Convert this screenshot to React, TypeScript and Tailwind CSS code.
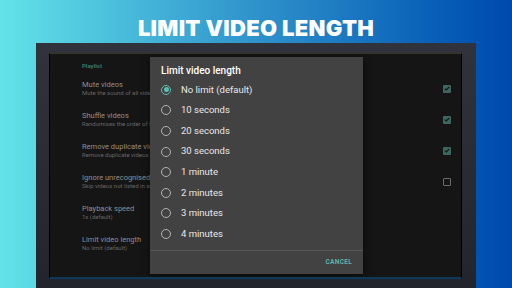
import React from "react";

const settings = [
  { title: "Mute videos", sub: "Mute the sound of all videos", check: true },
  { title: "Shuffle videos", sub: "Randomises the order of the videos", check: true },
  { title: "Remove duplicate videos", sub: "Remove duplicate videos", check: true },
  { title: "Ignore unrecognised/mismatched", sub: "Skip videos not listed in any playlist", check: false },
  { title: "Playback speed", sub: "1x (default)", check: null },
  { title: "Limit video length", sub: "No limit (default)", check: null },
];

const options = [
  "No limit (default)",
  "10 seconds",
  "20 seconds",
  "30 seconds",
  "1 minute",
  "2 minutes",
  "3 minutes",
  "4 minutes",
];

const CheckBox = ({ on }: { on: boolean }) =>
  on ? (
    <div className="w-[8px] h-[8px] rounded-[1px] bg-[#3d6661] flex items-center justify-center">
      <svg width="6" height="5" viewBox="0 0 6 5">
        <path d="M0.8 2.6 L2.3 4 L5.2 1" stroke="#151515" strokeWidth="1.1" fill="none" />
      </svg>
    </div>
  ) : (
    <div className="w-[8px] h-[8px] rounded-[1px] border border-[#6b6b6b]" />
  );

const Radio = ({ on }: { on: boolean }) =>
  on ? (
    <div className="w-[10px] h-[10px] rounded-full border-[1.5px] border-[#5ebdb3] flex items-center justify-center">
      <div className="w-[5px] h-[5px] rounded-full bg-[#5ebdb3]" />
    </div>
  ) : (
    <div className="w-[10px] h-[10px] rounded-full border-[1.5px] border-[#b3b3b3]" />
  );

export default function App() {
  return (
    <div
      className="w-[512px] h-[288px] overflow-hidden flex flex-col bg-gradient-to-r from-[#63e3e8] via-[#2f92cb] to-[#0048ad]"
      style={{ fontFamily: "Roboto, 'Noto Sans', sans-serif" }}
    >
      <div className="h-[43px] shrink-0 flex items-center justify-center pt-[12px]">
        <h1
          className="text-white text-[22px] leading-none font-black tracking-[0.3px]"
          style={{ fontFamily: "Inter, 'Liberation Sans', sans-serif" }}
        >
          LIMIT VIDEO LENGTH
        </h1>
      </div>

      <div className="ml-[36px] w-[440px] flex-1 flex bg-gradient-to-b from-[#30333b] to-[#22252b] pt-[10px] pl-[13px] pr-[14px] pb-[9px]">
        <div className="relative flex-1 bg-[#151515] border border-black border-t-[#3a3422] border-b-2 border-b-[#0c3a5a] overflow-hidden">
          <div className="pt-[7px] pl-[32px] pr-[10px]">
            <div className="text-[6px] leading-[9px] font-bold text-[#3b756e]">Playlist</div>
            <div className="mt-[3px]">
              {settings.map((s) => (
                <div key={s.title} className="h-[31px] flex items-center justify-between">
                  <div className="w-[68px] overflow-hidden flex flex-col whitespace-nowrap">
                    <span className="text-[7.5px] leading-[9px] text-[#8f8f8f]">{s.title}</span>
                    <span className="text-[6px] leading-[8px] text-[#666666]">{s.sub}</span>
                  </div>
                  {s.check !== null && <CheckBox on={s.check} />}
                </div>
              ))}
            </div>
          </div>

          <div className="absolute left-[100px] top-[3px] w-[213px] h-[217px] bg-[#424242] shadow-[0_2px_8px_rgba(0,0,0,0.6)] flex flex-col">
            <div className="pt-[9px] pl-[11px] text-[10px] leading-[10px] font-medium text-white">
              Limit video length
            </div>
            <div className="h-[174px] overflow-hidden pt-[3.5px]">
              {options.map((o, i) => (
                <div key={o} className="h-[20.6px] flex items-center pl-[11px]">
                  <Radio on={i === 0} />
                  <span className="ml-[10px] text-[9.5px] text-[#e8e8e8]">{o}</span>
                </div>
              ))}
              <div className="h-[20.6px] flex items-center pl-[11px]">
                <Radio on={false} />
              </div>
            </div>
            <div className="flex-1 border-t border-[#575757] flex items-center justify-end pr-[11px]">
              <span className="text-[6.5px] font-bold tracking-[0.3px] text-[#5fb3aa]">CANCEL</span>
            </div>
          </div>
        </div>
      </div>
    </div>
  );
}
